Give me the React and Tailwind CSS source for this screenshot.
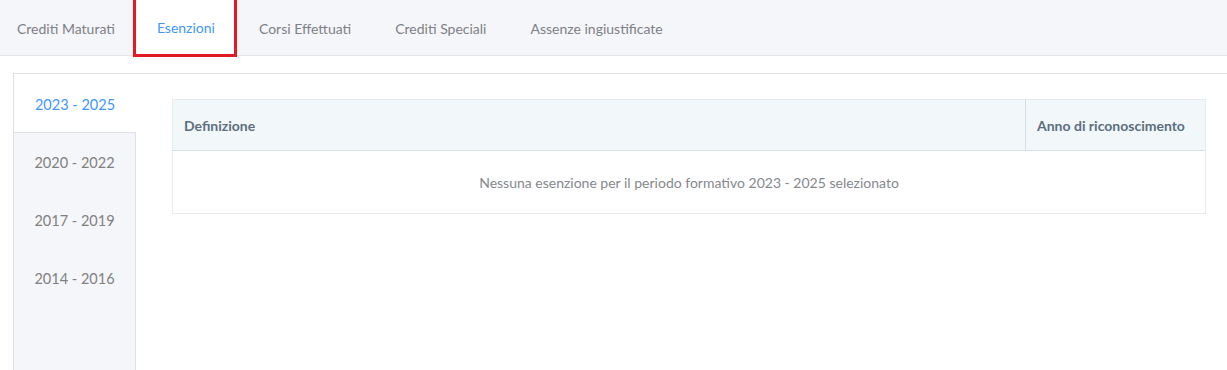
import React, { useState } from 'react';

const tabs = ['Crediti Maturati', 'Esenzioni', 'Corsi Effettuati', 'Crediti Speciali', 'Assenze ingiustificate'];
const periods = ['2023 - 2025', '2020 - 2022', '2017 - 2019', '2014 - 2016'];

const App = () => {
    const [tab, setTab] = useState(1);
    const [period, setPeriod] = useState(0);

    return (
        <div className="h-screen overflow-hidden bg-white flex flex-col" style={{ fontFamily: 'Lato, "Noto Sans", sans-serif' }}>
            {/* Top tabs */}
            <div className="h-[56px] shrink-0 bg-[#f5f6fa] border-b border-[#e3e5ea] flex items-stretch text-[14px]">
                {tabs.map((t, i) => (
                    <div
                        key={t}
                        onClick={() => setTab(i)}
                        className={`flex items-center pt-px cursor-pointer ${
                            i === tab
                                ? 'bg-white text-[#3f96fb] border-[3px] border-t-0 border-[#e01b22] pl-[21px] pr-[19px] h-[57px]'
                                : i === 0
                                  ? 'pl-[17px] pr-[18px] text-[#7d8085]'
                                  : 'px-[22px] text-[#7d8085]'
                        }`}
                    >
                        {t}
                    </div>
                ))}
            </div>

            {/* Content */}
            <div className="flex-1 pt-[17px] pl-[13px] flex flex-col min-h-0">
                <div className="flex-1 flex border-l border-t border-[#dfe1e6] min-h-0">
                    {/* Period tabs */}
                    <div className="w-[122px] shrink-0 flex flex-col text-[14.5px]">
                        {periods.map((p, i) => (
                            <div
                                key={p}
                                onClick={() => setPeriod(i)}
                                className={`h-[58px] shrink-0 flex items-center justify-center pt-[3px] cursor-pointer ${
                                    i === period
                                        ? 'bg-white text-[#3f96fb]'
                                        : 'bg-[#f5f6fa] text-[#808080] border-r border-[#dde0e6]'
                                } ${i === period + 1 ? 'border-t' : ''}`}
                            >
                                {p}
                            </div>
                        ))}
                        <div className="flex-1 bg-[#f5f6fa] border-r border-[#dde0e6]" />
                    </div>

                    {/* Table */}
                    <div className="flex-1 pl-[36px] pt-[25px] pr-[21px]">
                        <div className="border border-[#e8eaef] text-[14px]">
                            <div className="flex h-[51px] bg-[#f2f7fa] border-b border-[#d3e0e7] font-bold text-[#5a6e80]">
                                <div className="flex-1 flex items-center pl-[11px] pt-px">Definizione</div>
                                <div className="w-[180px] flex items-center pl-[11px] pt-px border-l border-[#d3e0e7]">
                                    Anno di riconoscimento
                                </div>
                            </div>
                            <div className="h-[62px] flex items-center justify-center text-[#85888d] pt-px">
                                Nessuna esenzione per il periodo formativo {periods[period]} selezionato
                            </div>
                        </div>
                    </div>
                </div>
            </div>
        </div>
    );
};

export default App;
